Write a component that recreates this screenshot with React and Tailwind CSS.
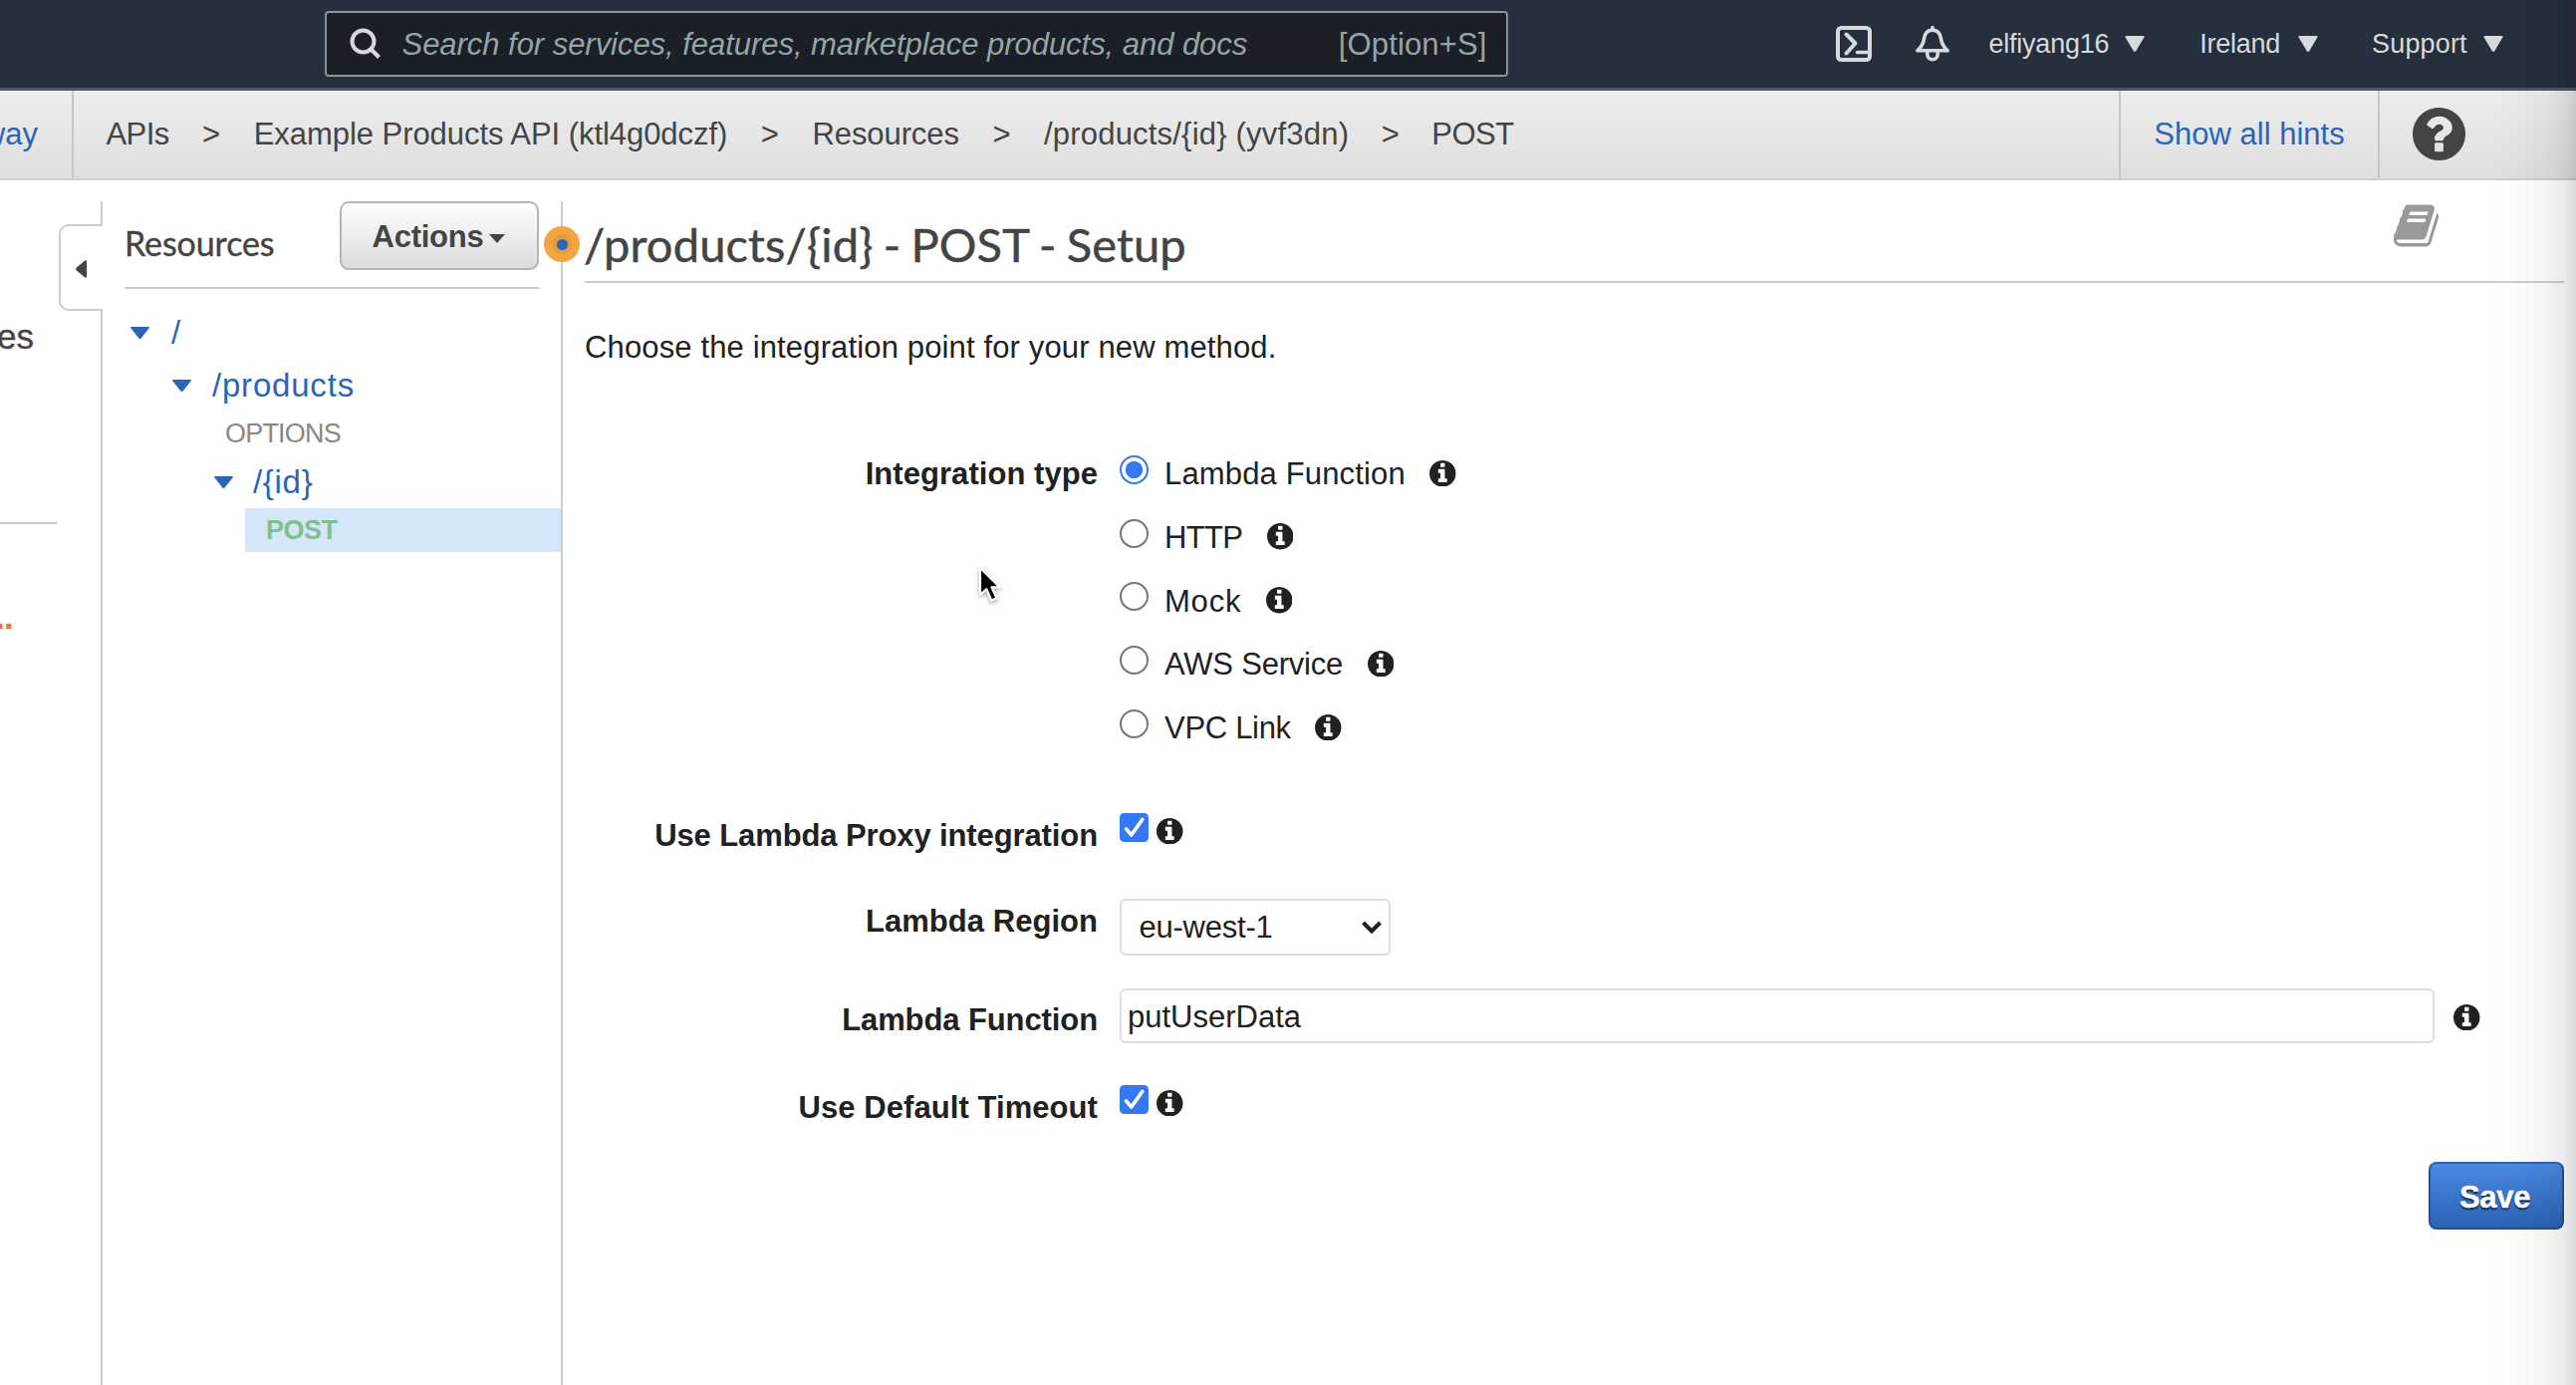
import React from "react";

const INFO_PATH =
  "M1152 1376v-160q0-14-9-23t-23-9h-96v-512q0-14-9-23t-23-9h-320q-14 0-23 9t-9 23v160q0 14 9 23t23 9h96v320h-96q-14 0-23 9t-9 23v160q0 14 9 23t23 9h448q14 0 23-9t9-23zm-128-896v-160q0-14-9-23t-23-9h-192q-14 0-23 9t-9 23v160q0 14 9 23t23 9h192q14 0 23-9t9-23zm640 416q0 209-103 385.5t-279.5 279.5-385.5 103-385.5-103-279.5-279.5-103-385.5 103-385.5 279.5-279.5 385.5-103 385.5 103 279.5 279.5 103 385.5z";

const HELP_PATH =
  "M1024 1376v-192q0-14-9-23t-23-9h-192q-14 0-23 9t-9 23v192q0 14 9 23t23 9h192q14 0 23-9t9-23zm256-672q0-88-55.5-163t-138.5-116-170-41q-243 0-371 213-15 24 8 42l132 100q7 6 19 6 16 0 25-12 53-68 86-92 34-24 86-24 48 0 85.5 26t37.5 59q0 38-20 61t-68 45q-63 28-115.5 86.5t-52.5 125.5v36q0 14 9 23t23 9h192q14 0 23-9t9-23q0-19 21.5-49.5t54.5-49.5q32-18 49-28.5t46-35 44.5-48 28-60.5 12.5-81zm384 192q0 209-103 385.5t-279.5 279.5-385.5 103-385.5-103-279.5-279.5-103-385.5 103-385.5 279.5-279.5 385.5-103 385.5 103 279.5 279.5 103 385.5z";

const BOOK_PATH =
  "M1703 478q40 57 18 129l-275 906q-19 64-76.5 107.5t-122.5 43.5h-923q-77 0-148.5-53.5t-99.5-131.5q-24-67-2-127 0-4 3-27t4-37q1-8-3-21.5t-3-19.5q2-11 8-21t16.5-23.5 16.5-23.5q23-38 45-91.5t30-91.5q3-10 .5-30t-.5-28q3-11 17-28t17-23q21-36 42-92t25-90q1-9-2.5-32t.5-28q4-13 22-30.5t22-22.5q19-26 42.5-84.5t27.5-96.5q1-8-3-25.5t-2-26.5q2-8 9-18t18-23 17-21q8-12 16.5-30.5t15-35 16-36 19.5-32 26.5-23.5 36-11.5 47.5 5.5l-1 3q38-9 51-9h761q74 0 114 56t18 130l-274 906q-36 119-71.5 153.5t-128.5 34.5h-869q-27 0-38 15-11 16-1 43 24 70 144 70h923q29 0 56-15.5t35-41.5l300-987q7-22 5-57 38 15 59 43zm-1064 2q-4 13 2 22.5t20 9.5h608q13 0 25.5-9.5t16.5-22.5l21-64q4-13-2-22.5t-20-9.5h-608q-13 0-25.5 9.5t-16.5 22.5zm-83 256q-4 13 2 22.5t20 9.5h608q13 0 25.5-9.5t16.5-22.5l21-64q4-13-2-22.5t-20-9.5h-608q-13 0-25.5 9.5t-16.5 22.5z";

function Info({ className = "" }) {
  return (
    <svg viewBox="128 128 1536 1536" className={`h-[26.5px] w-[26.5px] shrink-0 fill-[#212121] ${className}`}>
      <path d={INFO_PATH} />
    </svg>
  );
}

function NavCaret({ className = "" }) {
  return (
    <svg viewBox="0 0 20 16" className={`h-4 w-5 shrink-0 fill-[#d5dbdb] ${className}`}>
      <path d="M1.4 0h17.2q1.6 0 .8 1.6l-8.2 13.6q-1.2 1.6-2.4 0L.6 1.6Q-.2 0 1.4 0z" />
    </svg>
  );
}

function TreeCaret({ className = "" }) {
  return (
    <svg viewBox="0 0 19 12" className={`h-3 w-[19px] shrink-0 fill-[#2b65b8] ${className}`}>
      <path d="M1 0h17q1.6.2.6 1.6L10.6 11.4q-1.1 1-2.2 0L.4 1.6Q-.6.2 1 0z" />
    </svg>
  );
}

function TopBar() {
  return (
    <header className="flex h-[91px] shrink-0 items-center border-b-[3px] border-[#4c5560] bg-[#262f3e]">
      <div className="ml-[325.5px] flex h-[66px] w-[1188px] items-center rounded-[4px] border-[2.5px] border-[#879596] bg-[#1b1f27] text-[31px] text-[#95a5a6]">
        <svg viewBox="0 0 32 32" className="ml-[23px] h-8 w-8 fill-none stroke-[#d5dbdb] stroke-[4]">
          <circle cx="13.5" cy="13.5" r="11" />
          <path d="M21.5 21.5l8 8" />
        </svg>
        <span className="ml-[21px] pt-[2px] whitespace-nowrap italic tracking-[-0.04px]">
          Search for services, features, marketplace products, and docs
        </span>
        <span className="mr-[19px] ml-auto pt-[2px] tracking-[0.14px]">[Option+S]</span>
      </div>
      <svg viewBox="0 0 36 36" className="ml-[329px] h-9 w-9 shrink-0 fill-none stroke-[#d5dbdb]">
        <rect x="2" y="2" width="32" height="32" rx="3.5" strokeWidth="4" />
        <path d="M10.5 8.500l9 9-9 10" strokeWidth="4" strokeLinecap="round" strokeLinejoin="round" />
        <path d="M21.500 26.500h12" strokeWidth="3.600" strokeLinecap="round" />
      </svg>
      <svg viewBox="0 0 36 36" className="ml-[43px] h-9 w-9 shrink-0 fill-none stroke-[#d5dbdb]">
        <path d="M18 1.500v2.500" strokeWidth="3.500" strokeLinecap="round" />
        <path d="M2.800 24.800Q8.600 20 9.600 12.500C10.300 7 13.500 4.200 18 4.200S25.700 7 26.400 12.500Q27.400 20 33.200 24.800z" strokeWidth="3.600" strokeLinejoin="round" />
        <path d="M12.800 25v3.500a5.200 5.200 0 0 0 10.400 0V25" strokeWidth="3.600" />
      </svg>
      <nav className="flex items-center text-[27px] text-[#d5dbdb]">
        <span className="ml-[39px] pt-px tracking-[-0.23px]">elfiyang16</span>
        <NavCaret className="ml-4" />
        <span className="ml-[55px] pt-px tracking-[-0.26px]">Ireland</span>
        <NavCaret className="ml-[18px]" />
        <span className="ml-[54px] pt-px tracking-[0.16px]">Support</span>
        <NavCaret className="ml-4" />
      </nav>
    </header>
  );
}

function Breadcrumbs() {
  return (
    <div className="flex h-[90px] shrink-0 items-stretch border-b-[2px] border-[#cfcfcf] bg-linear-to-b from-[#ededed] to-[#dfdfdf] text-[31px] text-[#444]">
      <div className="flex w-[74px] items-center justify-end border-r-2 border-[#c6c6c6] pr-[34px] text-[#2b65b8]">way</div>
      <div className="flex items-center gap-[33.5px] pl-[32.5px] whitespace-nowrap">
        <span className="tracking-[-0.6px]">APIs</span>
        <span>&gt;</span>
        <span className="tracking-[-0.05px]">Example Products API (ktl4g0dczf)</span>
        <span>&gt;</span>
        <span className="tracking-[-0.08px]">Resources</span>
        <span>&gt;</span>
        <span className="tracking-[0.2px]">/products/&#123;id&#125; (yvf3dn)</span>
        <span className="-ml-px">&gt;</span>
        <span className="-ml-px tracking-[-0.5px]">POST</span>
      </div>
      <div className="ml-auto flex w-[262px] items-center justify-center border-x-2 border-[#c6c6c6] text-[#2b65b8]">
        Show all hints
      </div>
      <div className="flex w-[197px] items-center pb-[2px] pl-[33px]">
        <svg viewBox="128 128 1536 1536" className="h-[53px] w-[53px] fill-[#444]">
          <path d={HELP_PATH} />
        </svg>
      </div>
    </div>
  );
}

function OuterNav() {
  return (
    <>
      <div className="flex w-[59px] shrink-0 flex-col">
        <div className="mr-[2px] flex h-[324px] items-start justify-end border-b-2 border-[#ccc] pt-[116px] pr-[23px] text-[35px] leading-10 text-[#444] [-webkit-text-stroke:0.4px_#444]">
          es
        </div>
        <div className="mt-[75px] flex w-[13px] justify-end text-[31px] leading-10 font-bold text-[#e47b32] [-webkit-text-stroke:0.6px_#e47b32]">
          ...
        </div>
      </div>
      <div className="flex w-11 shrink-0 flex-col">
        <div className="h-[23px] border-r-2 border-[#ccc]" />
        <div className="flex h-[87px] items-center rounded-l-[10px] border-y-2 border-l-2 border-[#ccc] pl-[15px]">
          <svg viewBox="0 0 11 18" className="mt-[3px] h-[18px] w-[11px] fill-[#444]">
            <path d="M11 1.500v15q-.5 2-2 .8L.6 10.200q-1-1.200 0-2.400L9 .7q1.500-1.200 2 .8z" />
          </svg>
        </div>
        <div className="flex-1 border-r-2 border-[#ccc]" />
      </div>
    </>
  );
}

function ResourceTree() {
  return (
    <aside className="flex w-[460px] shrink-0 flex-col">
      <div className="ml-[22px] flex h-[88px] w-[416px] items-start justify-between border-b-[2.5px] border-[#ccc]">
        <h2 className="font-[Lato] text-[34px] leading-[84px] tracking-[-0.1px] text-[#444] [-webkit-text-stroke:0.4px_#444]">
          Resources
        </h2>
        <button className="flex h-[69px] w-[200px] items-center justify-center rounded-[9px] border-2 border-[#b5b5b5] bg-linear-to-b from-white to-[#dcdcdc] pt-[4px] pr-[2px] text-[31px] font-bold text-[#444]">
          <span className="tracking-[-0.24px]">Actions</span>
          <svg viewBox="0 0 16 9" className="mt-0.5 ml-[5px] h-[9px] w-4 fill-[#444]">
            <path d="M0 0h16L8 9z" />
          </svg>
        </button>
      </div>
      <div className="mt-[17px] flex flex-col text-[33px] text-[#2b65b8]">
        <div className="flex h-[53px] items-center pl-7">
          <TreeCaret />
          <span className="ml-[22px]">/</span>
        </div>
        <div className="flex h-[53px] items-center pl-[70px]">
          <TreeCaret />
          <span className="ml-[21px] tracking-[0.8px]">/products</span>
        </div>
        <div className="flex h-11 items-center pl-[123px] text-[27px] tracking-[-0.8px] text-[#888]">OPTIONS</div>
        <div className="flex h-[53px] items-center pl-[112px]">
          <TreeCaret />
          <span className="ml-[20px] tracking-[0.7px]">/&#123;id&#125;</span>
        </div>
        <div className="ml-[143px] flex h-11 items-center bg-[#d5e6fb] pl-[21px] text-[27px] font-bold tracking-[-0.5px] text-[#7fc18b]">
          POST
        </div>
      </div>
    </aside>
  );
}

function Check() {
  return (
    <svg viewBox="0 0 29 29" className="-mt-[15px] h-[29px] w-[29px] shrink-0">
      <rect width="29" height="29" rx="4.500" fill="#3478f6" />
      <path d="M6.500 15.800l5.300 6.200L22.700 6.500" fill="none" stroke="#fff" strokeWidth="3.600" strokeLinecap="round" strokeLinejoin="round" />
    </svg>
  );
}

function Radio({ checked }) {
  return (
    <svg viewBox="0 0 29 29" className="-mt-[7px] h-[29px] w-[29px] shrink-0">
      <circle cx="14.5" cy="14.5" r="13.5" fill="#fff" stroke={checked ? "#3478f6" : "#767676"} strokeWidth="2" />
      {checked && <circle cx="14.5" cy="14.5" r="8.7" fill="#3478f6" />}
    </svg>
  );
}

function Label({ children, className = "" }) {
  return <div className={`mr-[22px] w-[515px] shrink-0 text-right font-bold ${className}`}>{children}</div>;
}

const TYPES = [
  { name: "Lambda Function", spacing: "tracking-[0.15px]", checked: true },
  { name: "HTTP", spacing: "tracking-[-0.7px]" },
  { name: "Mock", spacing: "tracking-[0.8px]" },
  { name: "AWS Service", spacing: "tracking-[-0.22px]" },
  { name: "VPC Link", spacing: "tracking-[-0.3px]" },
];

function SetupForm() {
  return (
    <main className="relative flex flex-1 flex-col border-l-2 border-[#ccc] pr-3 pl-[22px] text-[31px] text-[#212121]">
      <div className="absolute top-[25px] -left-[19px] flex h-9 w-9 items-center justify-center rounded-full bg-[#f3a540]">
        <div className="flex h-5 w-5 items-center justify-center rounded-full bg-[#e69a40]">
          <div className="h-[11px] w-[11px] rounded-full bg-[#2b65b8]" />
        </div>
      </div>

      <div className="flex h-[82px] items-start justify-between border-b-[2.5px] border-[#ccc]">
        <h1 className="-ml-px font-[Lato] text-[47px] leading-[86px] tracking-[0.15px] [word-spacing:-2px] text-[#444] [-webkit-text-stroke:0.5px_#444]">
          /products/&#123;id&#125; - POST - Setup
        </h1>
        <svg viewBox="0 0 1792 1792" className="mr-[124px] h-[49px] w-[49px] fill-[#999]">
          <path d={BOOK_PATH} />
        </svg>
      </div>

      <p className="h-32 leading-[130px] tracking-[0.14px]">Choose the integration point for your new method.</p>

      <div className="mt-[31px] flex">
        <Label className="leading-[66px] tracking-[0.05px]">Integration type</Label>
        <div>
          {TYPES.map((type) => (
            <div key={type.name} className="flex h-[63.75px] items-center">
              <Radio checked={type.checked} />
              <span className={`ml-[16px] pt-[3px] ${type.spacing}`}>{type.name}</span>
              <Info className="ml-[24.5px]" />
            </div>
          ))}
        </div>
      </div>

      <div className="mt-11 flex h-16 items-center">
        <Label className="pt-[2px] tracking-[-0.11px]">Use Lambda Proxy integration</Label>
        <Check />
        <Info className="-mt-2 ml-2" />
      </div>

      <div className="mt-8 flex h-[57px] items-start">
        <Label className="leading-[46px] tracking-[0.04px]">Lambda Region</Label>
        <div className="flex h-[57px] w-[272px] items-center rounded-[6px] border-2 border-[#dedede] bg-white pr-[7px] pl-[17.5px]">
          <span className="pt-[2px] tracking-[-0.23px]">eu-west-1</span>
          <svg viewBox="0 0 20 13" className="ml-auto h-[13px] w-5 fill-none stroke-[#212121] stroke-4">
            <path d="M1.500 2L10 10.500 18.500 2" />
          </svg>
        </div>
      </div>

      <div className="mt-[33px] flex h-[55px] items-center">
        <Label className="pt-[10px] tracking-[-0.1px]">Lambda Function</Label>
        <div className="flex h-[55px] w-[1320px] items-center rounded-[6px] border-2 border-[#dedede] bg-white pt-[4px] pl-[6px]">
          putUserData
        </div>
        <Info className="mt-[3px] ml-[19px]" />
      </div>

      <div className="mt-8 flex h-16 items-center">
        <Label className="pt-[2px] tracking-[0.07px]">Use Default Timeout</Label>
        <Check />
        <Info className="-mt-2 ml-2" />
      </div>

      <button className="mt-[23px] flex h-[68px] w-[136px] items-center justify-center self-end rounded-[8px] border-2 border-[#24508f] border-t-[#2f64b3] bg-linear-to-b from-[#4a8ae5] to-[#2b62b3] pt-1 pr-[3px] font-bold tracking-[-0.3px] text-white [-webkit-text-stroke:0.4px_white] text-shadow-[0_2px_2px_rgba(0,0,0,0.7)]">
        Save
      </button>
    </main>
  );
}

export default function App() {
  return (
    <div className="relative flex h-[1390px] w-[2586px] flex-col overflow-hidden bg-white font-['Liberation_Sans',Arial,sans-serif]">
      <TopBar />
      <Breadcrumbs />
      <div className="flex min-h-0 flex-1 pt-[21px]">
        <OuterNav />
        <ResourceTree />
        <SetupForm />
      </div>

      <svg viewBox="0 0 30 42" className="pointer-events-none absolute top-[568px] left-[980px] h-[42px] w-[30px] drop-shadow-[0_2px_2px_rgba(0,0,0,0.35)]">
        <path d="M4 2v27l6.300-5.800 5 11.300 5.200-2.200-5-11h8z" fill="#000" stroke="#fff" strokeWidth="2.200" strokeLinejoin="round" />
      </svg>
      <div className="pointer-events-none absolute inset-y-0 right-0 w-[84px] bg-[linear-gradient(to_right,rgba(0,0,0,0),rgba(0,0,0,0.012)_30%,rgba(0,0,0,0.045)_65%,rgba(0,0,0,0.08)_85%,rgba(0,0,0,0.14))]" />
    </div>
  );
}
